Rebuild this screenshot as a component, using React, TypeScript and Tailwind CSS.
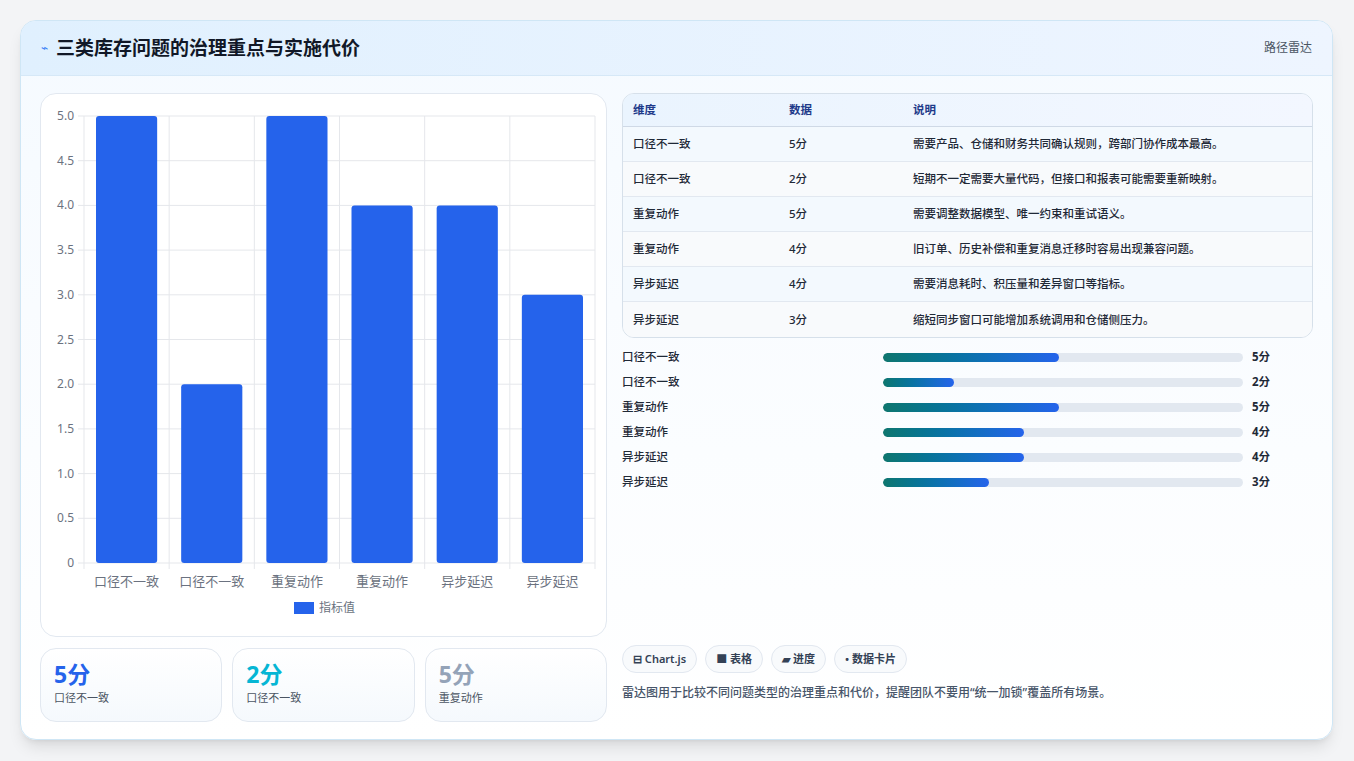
const rows = [
  ["口径不一致", 5, "需要产品、仓储和财务共同确认规则，跨部门协作成本最高。"],
  ["口径不一致", 2, "短期不一定需要大量代码，但接口和报表可能需要重新映射。"],
  ["重复动作", 5, "需要调整数据模型、唯一约束和重试语义。"],
  ["重复动作", 4, "旧订单、历史补偿和重复消息迁移时容易出现兼容问题。"],
  ["异步延迟", 4, "需要消息耗时、积压量和差异窗口等指标。"],
  ["异步延迟", 3, "缩短同步窗口可能增加系统调用和仓储侧压力。"],
] as const;

const font = { fontFamily: '"Noto Sans", "Noto Sans CJK SC", sans-serif' };

function Chart() {
  const x0 = 43, x1 = 554, y0 = 22, y1 = 469;
  const cw = (x1 - x0) / 6;
  const ticks = [0, 0.5, 1, 1.5, 2, 2.5, 3, 3.5, 4, 4.5, 5];
  const y = (v: number) => y1 - (v / 5) * (y1 - y0);
  return (
    <svg width="566" height="543" className="block">
      {ticks.map((t) => (
        <g key={t}>
          <line x1={x0 - 6} x2={x1} y1={y(t)} y2={y(t)} stroke="#e5e7eb" />
          <text x={x0 - 10} y={y(t) + 4} textAnchor="end" fontSize="12" fill="#6b7280">
            {t === 0 ? "0" : t.toFixed(1)}
          </text>
        </g>
      ))}
      {Array.from({ length: 7 }).map((_, i) => (
        <line key={i} x1={x0 + i * cw} x2={x0 + i * cw} y1={y0} y2={y1 + 6} stroke="#e5e7eb" />
      ))}
      {rows.map((r, i) => (
        <g key={i}>
          <rect x={x0 + i * cw + 12} y={y(r[1])} width={cw - 24} height={y1 - y(r[1])} rx="3" fill="#2563eb" />
          <text x={x0 + i * cw + cw / 2} y={y1 + 23} textAnchor="middle" fontSize="13" fill="#6b7280">
            {r[0]}
          </text>
        </g>
      ))}
      <rect x="253" y="508" width="20" height="12" fill="#2563eb" />
      <text x="278" y="518" fontSize="12" fill="#6b7280">指标值</text>
    </svg>
  );
}

export default function App() {
  return (
    <div className="w-[1354px] h-[761px] bg-[#f3f4f6] p-5 pb-5" style={font}>
      <div className="h-[720px] w-[1313px] rounded-2xl border border-[#cfe6f5] bg-gradient-to-b from-[#f5faff] to-white shadow-lg overflow-hidden flex flex-col">
        <div className="h-[55px] shrink-0 flex items-center justify-between px-5 bg-gradient-to-r from-[#e0f0fe] to-[#eef5ff] border-b border-[#d6e8f7]">
          <div className="flex items-center gap-2">
            <span className="text-[#3b82f6] text-xs">⌁</span>
            <h1 className="text-[19px] font-bold text-[#111827]">三类库存问题的治理重点与实施代价</h1>
          </div>
          <span className="text-[12px] text-[#4b5563]">路径雷达</span>
        </div>
        <div className="flex gap-[15px] px-[19px] pt-[17px]">
          <div className="w-[567px] flex flex-col gap-[11px]">
            <div className="h-[544px] rounded-2xl border border-[#e2e8f0] bg-white">
              <Chart />
            </div>
            <div className="grid grid-cols-3 gap-[10px]">
              {[
                ["5分", "口径不一致", "text-[#2563eb]"],
                ["2分", "口径不一致", "text-[#06b6d4]"],
                ["5分", "重复动作", "text-[#94a3b8]"],
              ].map(([v, l, c], i) => (
                <div key={i} className="h-[74px] rounded-2xl border border-[#e2e8f0] bg-gradient-to-b from-white to-[#f5f9fd] px-[13px] pt-[9px]">
                  <div className={`text-[23px] font-bold leading-8 ${c}`}>{v}</div>
                  <div className="text-[11px] text-[#4b5563]">{l}</div>
                </div>
              ))}
            </div>
          </div>
          <div className="w-[693px] flex flex-col">
            <div className="rounded-xl border border-[#d6e0ea] overflow-hidden text-[11.5px] text-[#1f2937]">
              <div className="flex h-[33px] items-center bg-gradient-to-r from-[#eaf4fe] to-[#f3f7ff] border-b border-[#cfd9e6] font-semibold text-[#1e3a8a]">
                <div className="w-[166px] pl-[10px]">维度</div>
                <div className="w-[124px]">数据</div>
                <div>说明</div>
              </div>
              {rows.map((r, i) => (
                <div key={i} className={`flex h-[35px] items-center font-medium ${i < 5 ? "border-b border-[#e2e8f0]" : ""} ${i % 2 ? "bg-[#f8fafc]" : "bg-[#f3f9fe]"}`}>
                  <div className="w-[166px] pl-[10px]">{r[0]}</div>
                  <div className="w-[124px]">{r[1]}分</div>
                  <div>{r[2]}</div>
                </div>
              ))}
            </div>
            <div className="flex flex-col gap-[7px] mt-[10px]">
              {rows.map((r, i) => (
                <div key={i} className="flex items-center h-[18px] text-[11.5px] font-medium text-[#1f2937]">
                  <div className="w-[261px]">{r[0]}</div>
                  <div className="w-[360px] h-[9px] rounded-full bg-[#e2e8f0] overflow-hidden">
                    <div className="h-full rounded-full bg-gradient-to-r from-[#0f766e] to-[#2563eb]" style={{ width: `${r[1] * 9.8}%` }} />
                  </div>
                  <div className="ml-[9px] font-bold">{r[1]}分</div>
                </div>
              ))}
            </div>
            <div className="mt-auto flex gap-2 text-[11px] font-semibold text-[#334155] pt-[0px]">
              {["⊟ Chart.js", "■ 表格", "▰ 进度", "• 数据卡片"].map((t) => (
                <span key={t} className="h-[28px] px-[10px] flex items-center rounded-full border border-[#e2e8f0] bg-[#f8fafc]">{t}</span>
              ))}
            </div>
            <p className="mt-[11px] mb-[20px] text-[12px] font-medium text-[#475569]">雷达图用于比较不同问题类型的治理重点和代价，提醒团队不要用“统一加锁”覆盖所有场景。</p>
          </div>
        </div>
      </div>
    </div>
  );
}
